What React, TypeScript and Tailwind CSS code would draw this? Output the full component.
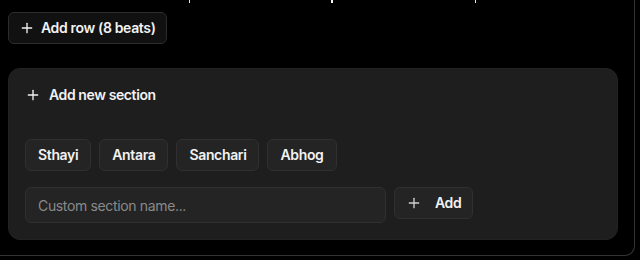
import React from "react";

function PlusIcon({ className = "" }: { className?: string }) {
  return (
    <svg
      viewBox="0 0 24 24"
      fill="none"
      stroke="currentColor"
      strokeWidth={2}
      strokeLinecap="round"
      strokeLinejoin="round"
      className={className}
    >
      <path d="M5 12h14" />
      <path d="M12 5v14" />
    </svg>
  );
}

export default function App() {
  const chips = ["Sthayi", "Antara", "Sanchari", "Abhog"];
  return (
    <div
      className="w-[640px] h-[260px] bg-black overflow-hidden text-[#f2f2f2] tracking-tight"
      style={{ fontFamily: "Inter, 'Noto Sans', sans-serif" }}
    >
      <div className="mr-[5px] h-[256px] border-r border-b border-[#333333] rounded-br-[10px] flex flex-col">
        <svg width="635" height="3" className="block shrink-0">
          <rect x="189" y="0" width="1" height="3" fill="#e5e5e5" />
          <rect x="331" y="0" width="2" height="3" fill="#f5f5f5" />
          <rect x="475" y="0" width="1" height="3" fill="#e5e5e5" />
        </svg>
        <div className="pl-2 pt-[9px]">
          <button className="h-8 flex items-center gap-1.5 pl-2.5 pr-2.5 rounded-md bg-[#111111] border border-[#2c2c2c] text-sm font-semibold tracking-tight text-[#f2f2f2]">
            <PlusIcon className="w-4 h-4" />
            <span>Add row (8 beats)</span>
          </button>
        </div>
        <div className="ml-2 mt-6 w-[610px] rounded-xl bg-[#1e1e1e] border border-[#222222] p-4">
          <div className="h-5 flex items-center gap-2 text-sm font-semibold">
            <PlusIcon className="w-4 h-4" />
            <span>Add new section</span>
          </div>
          <div className="mt-[34px] flex gap-2">
            {chips.map((c) => (
              <button
                key={c}
                className="h-8 px-3 rounded-md bg-[#242424] border border-[#303030] text-sm font-semibold tracking-tight text-[#f2f2f2]"
              >
                {c}
              </button>
            ))}
          </div>
          <div className="mt-4 flex items-start gap-2">
            <input
              className="w-[361px] h-9 px-3 rounded-md bg-[#242424] border border-[#303030] text-sm tracking-tight text-[#f2f2f2] placeholder:text-[#8a8a8a] outline-none"
              placeholder="Custom section name..."
            />
            <button className="h-8 flex items-center gap-[13px] pl-[11px] pr-[11px] rounded-md bg-[#242424] border border-[#303030] text-sm font-semibold tracking-tight text-[#f2f2f2]">
              <PlusIcon className="w-4 h-4 text-[#d0d0d0]" />
              <span>Add</span>
            </button>
          </div>
        </div>
      </div>
    </div>
  );
}
